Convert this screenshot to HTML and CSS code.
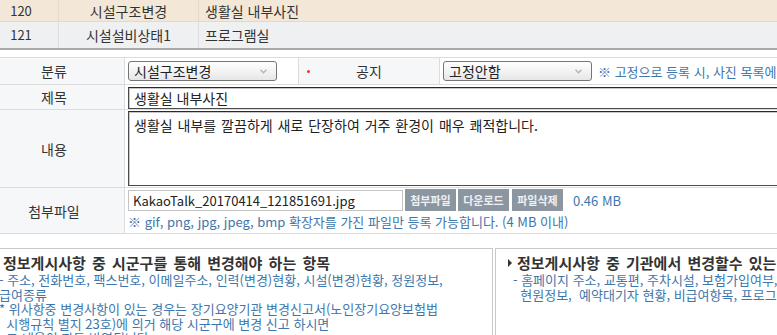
FILE: index.html
```html
<!DOCTYPE html>
<html lang="ko">
<head>
<meta charset="utf-8">
<title>사진 게시판</title>
<link rel="stylesheet" href="styles.css">
</head>
<body>
<div class="page">
  <div class="list">
    <div class="list-row hl">
      <div class="c c-no">120</div>
      <div class="c c-cat">시설구조변경</div>
      <div class="c c-title">생활실 내부사진</div>
    </div>
    <div class="list-row alt">
      <div class="c c-no">121</div>
      <div class="c c-cat">시설설비상태1</div>
      <div class="c c-title">프로그램실</div>
    </div>
  </div>

  <div class="form">
    <div class="th r1">분류</div>
    <div class="td r1">
      <div class="select"><span>시설구조변경</span><svg class="chev" width="7" height="5" viewBox="0 0 7 5"><path d="M0.5 0.8 L3.5 3.8 L6.5 0.8" fill="none" stroke="#b4b4b4" stroke-width="1.4"/></svg></div>
    </div>
    <div class="th r1 notice"><span class="dot"></span><span>공지</span><span></span></div>
    <div class="td r1">
      <div class="select"><span>고정안함</span><svg class="chev" width="7" height="5" viewBox="0 0 7 5"><path d="M0.5 0.8 L3.5 3.8 L6.5 0.8" fill="none" stroke="#b4b4b4" stroke-width="1.4"/></svg></div>
      <span class="note">※ 고정으로 등록 시, 사진 목록에 상단 고정됩니다.</span>
    </div>

    <div class="th r2">제목</div>
    <div class="td r2 span3"><div class="input">생활실 내부사진</div></div>

    <div class="th r3">내용</div>
    <div class="td r3 span3"><div class="textarea">생활실 내부를 깔끔하게 새로 단장하여 거주 환경이 매우 쾌적합니다.</div></div>

    <div class="th r4">첨부파일</div>
    <div class="td r4 span3 file-cell">
      <div class="file-line">
        <div class="file-box">KakaoTalk_20170414_121851691.jpg</div>
        <button class="btn first">첨부파일</button>
        <button class="btn">다운로드</button>
        <button class="btn">파일삭제</button>
        <span class="size">0.46 MB</span>
      </div>
      <div class="hint">※ gif, png, jpg, jpeg, bmp 확장자를 가진 파일만 등록 가능합니다. (4 MB 이내)</div>
    </div>
  </div>

  <div class="info">
    <div class="box left">
      <div class="box-title">정보게시사항 중 시군구를 통해 변경해야 하는 항목</div>
      <div class="box-text">- 주소, 전화번호, 팩스번호, 이메일주소, 인력(변경)현황, 시설(변경)현황, 정원정보,<br>급여종류<br>* 위사항중 변경사항이 있는 경우는 장기요양기관 변경신고서(노인장기요양보험법<br>&nbsp;&nbsp;시행규칙 별지 23호)에 의거 해당 시군구에 변경 신고 하시면<br>&nbsp;&nbsp;그 내용이 자동 반영됩니다.</div>
    </div>
    <div class="box right">
      <div class="box-title">정보게시사항 중 기관에서 변경할수 있는 항목</div>
      <div class="box-text">- 홈페이지 주소, 교통편, 주차시설, 보험가입여부, 입소정원,<br>&nbsp;&nbsp;현원정보,&nbsp;&nbsp;예약대기자 현황, 비급여항목, 프로그램</div>
    </div>
  </div>
</div>
</body>
</html>
```

FILE: styles.css
```css
html, body {
  margin: 0;
  padding: 0;
  background: #fff;
}
body {
  overflow: hidden;
  width: 777px;
  height: 335px;
  font-family: "Noto Sans CJK KR", "Noto Sans", sans-serif;
  font-size: 14px;
  color: #333;
}
.page {
  margin-left: -16px;
  width: 980px;
}

/* list */
.list-row {
  display: grid;
  grid-template-columns: 75px 140px 1fr;
  box-sizing: border-box;
}
.list-row.hl {
  height: 22px;
  background: #f3e7d8;
  border-bottom: 1px solid #e3d8c9;
}
.list-row.alt {
  height: 28px;
  background: #eff0f2;
  border-bottom: 2px solid #a9a9a9;
}
.c {
  display: flex;
  align-items: center;
  line-height: 16px;
  white-space: nowrap;
}
.c-no, .c-cat {
  justify-content: center;
}
.c-no { font-size: 13px; }
.hl .c-no, .hl .c-cat { border-right: 1px solid #e6dacb; }
.alt .c-no, .alt .c-cat { border-right: 1px solid #dcdde0; }
.c-title { padding-left: 6px; }

/* form */
.form {
  display: grid;
  grid-template-columns: 141px 173px 142px 1fr;
  border-top: 1px solid #dcdcdc;
  margin-top: 7px;
}
.th, .td {
  box-sizing: border-box;
  border-bottom: 1px solid #dcdcdc;
}
.th {
  background: #f6f7f8;
  display: flex;
  align-items: center;
  justify-content: center;
  border-right: 1px solid #dcdcdc;
  color: #333;
}
.td {
  display: flex;
  align-items: center;
  padding-left: 3px;
  background: #fff;
  white-space: nowrap;
}
.r1 { height: 27px; }
.r2 { height: 25px; }
.r3 { height: 78px; }
.r4 { height: 46px; }
.span3 { grid-column: span 3; }

.th.notice {
  display: grid;
  grid-template-columns: 1fr auto 1fr;
  align-items: center;
  border-left: 1px solid #dcdcdc;
}
.dot {
  justify-self: start;
  margin-left: 8px;
  width: 3px;
  height: 3px;
  border-radius: 50%;
  background: #e23a2e;
}

.select {
  box-sizing: border-box;
  width: 149px;
  height: 20px;
  border: 1px solid #767676;
  border-radius: 3px;
  background: linear-gradient(#ffffff, #f1f1f1 60%, #e6e6e6);
  display: flex;
  align-items: center;
  justify-content: space-between;
  padding: 0 9px 0 5px;
  color: #222;
  line-height: 16px;
}
.chev { display: block; }
.note {
  margin-left: 6px;
  font-size: 13px;
  color: #3d77ad;
}

.input {
  box-sizing: border-box;
  width: 900px;
  height: 22px;
  margin-top: 1px;
  border: 1px solid #4a4a4a;
  border-top-color: #2a2a2a;
  box-shadow: inset 1px 1px 0 #c8c8c8;
  padding-left: 5px;
  display: flex;
  align-items: center;
  color: #222;
}
.r3.td { align-items: flex-start; }
.textarea {
  box-sizing: border-box;
  width: 900px;
  height: 75px;
  margin-top: 1px;
  border: 1px solid #4a4a4a;
  border-top-color: #2a2a2a;
  box-shadow: inset 1px 1px 0 #c8c8c8;
  padding: 4px 0 0 5px;
  line-height: 18px;
  word-spacing: 1px;
  color: #222;
}

.file-cell {
  flex-direction: column;
  align-items: flex-start;
  justify-content: flex-start;
  padding-top: 1px;
}
.file-line {
  display: flex;
  align-items: center;
  height: 22px;
}
.file-box {
  box-sizing: border-box;
  width: 275px;
  height: 21px;
  border: 1px solid #c4c4c4;
  padding-left: 4px;
  display: flex;
  align-items: center;
  font-size: 13px;
  color: #222;
}
.btn {
  box-sizing: border-box;
  width: 51px;
  height: 22px;
  margin: 0 0 0 2px;
  padding: 0;
  border: none;
  background: #8b96a1;
  color: #eef1f4;
  font-family: "Noto Sans CJK KR", "Noto Sans", sans-serif;
  font-size: 11px;
  font-weight: bold;
}
.btn + .btn { margin-left: 2px; }
.btn + .btn + .btn { margin-left: 3px; }
.size {
  margin-left: 10px;
  font-size: 13px;
  color: #3d77ad;
}
.hint {
  margin-top: 3px;
  line-height: 15px;
  font-size: 13px;
  color: #3d77ad;
}

/* info boxes */
.info {
  display: flex;
  gap: 2px;
  margin-top: 14px;
  margin-left: -3px;
}
.box {
  box-sizing: border-box;
  border: 1px solid #c8c8c8;
  height: 120px;
  padding: 5px 0 0 12px;
  overflow: hidden;
}
.box.left { width: 512px; flex: none; }
.box.right { flex: 1; }
.box-title {
  font-size: 15px;
  font-weight: bold;
  line-height: 17px;
  word-spacing: 2px;
  white-space: nowrap;
  color: #333;
}
.box-title::before {
  content: "";
  display: inline-block;
  border-left: 4px solid #333;
  border-top: 4px solid transparent;
  border-bottom: 4px solid transparent;
  margin-right: 5px;
  vertical-align: 2px;
}
.box-text {
  font-size: 13px;
  color: #3d77ad;
  line-height: 14.5px;
  margin-top: 2px;
  padding-left: 5px;
  white-space: nowrap;
}
```
